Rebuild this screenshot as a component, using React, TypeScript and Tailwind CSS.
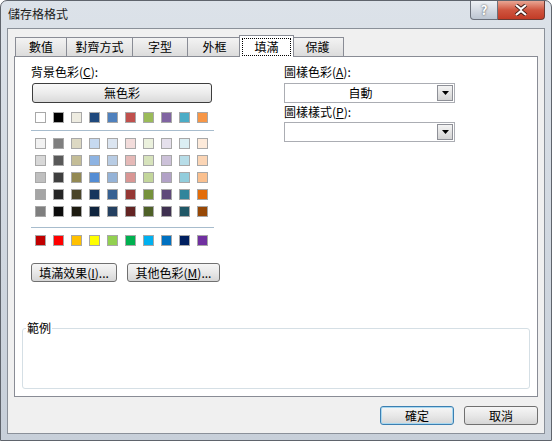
import React from "react";

const THEME = ["#ffffff", "#000000", "#eeece1", "#1f497d", "#4f81bd", "#c0504d", "#9bbb59", "#8064a2", "#4bacc6", "#f79646"];

const SHADES = [
  ["#f2f2f2", "#7f7f7f", "#ddd9c3", "#c6d9f0", "#dbe5f1", "#f2dcdb", "#ebf1dd", "#e5e0ec", "#dbeef3", "#fdeada"],
  ["#d8d8d8", "#595959", "#c4bd97", "#8db3e2", "#b8cce4", "#e5b9b7", "#d7e3bc", "#ccc1d9", "#b7dde8", "#fbd5b5"],
  ["#bfbfbf", "#3f3f3f", "#938953", "#548dd4", "#95b3d7", "#d99694", "#c3d69b", "#b2a2c7", "#92cddc", "#fac08f"],
  ["#a5a5a5", "#262626", "#494429", "#17365d", "#366092", "#953734", "#76923c", "#5f497a", "#31859b", "#e36c09"],
  ["#7f7f7f", "#0c0c0c", "#1d1b10", "#0f243e", "#244061", "#632423", "#4f6128", "#3f3151", "#205867", "#974806"],
];

const STANDARD = ["#c00000", "#ff0000", "#ffc000", "#ffff00", "#92d050", "#00b050", "#00b0f0", "#0070c0", "#002060", "#7030a0"];

const TABS = [
  { label: "數值", w: "w-[52px]" },
  { label: "對齊方式", w: "w-[67px]" },
  { label: "字型", w: "w-[56px]" },
  { label: "外框", w: "w-[55px]" },
  { label: "填滿", w: "w-[55px]", active: true },
  { label: "保護", w: "w-[53px]" },
];

function SwatchRow({ colors }: { colors: string[] }) {
  return (
    <div className="flex gap-[7px] pl-[4px]">
      {colors.map((c, i) => (
        <span
          key={i}
          className="block w-[11px] h-[11px] border border-[#a8a8a8]"
          style={{ background: c }}
        />
      ))}
    </div>
  );
}

function Button({ children, w, focus }: { children: React.ReactNode; w: string; focus?: boolean }) {
  return (
    <div
      className={`${w} shrink-0 h-[19px] flex items-center justify-center rounded-[3px] border bg-gradient-to-b from-[#f6f6f6] via-[#e8e8e8] to-[#d6d6d6] text-black ${
        focus ? "border-[#3c7fb1] shadow-[inset_0_0_0_1px_#a8d8f0]" : "border-[#707070]"
      }`}
    >
      {children}
    </div>
  );
}

function Combo({ value }: { value?: string }) {
  return (
    <div className="w-[171px] h-[20px] flex border border-[#abadb3] bg-white">
      <div className="flex-1 flex items-center justify-center">{value}</div>
      <div className="w-[16px] m-[1px] flex items-center justify-center border border-[#8e9097] bg-gradient-to-b from-[#f4f4f4] to-[#d4d4d4]">
        <svg width="7" height="4" viewBox="0 0 7 4">
          <path d="M0 0h7L3.5 4z" fill="#000" />
        </svg>
      </div>
    </div>
  );
}

export default function App() {
  return (
    <div className="w-[552px] h-[441px] bg-white font-['Noto_Sans_CJK_TC','Noto_Sans_CJK_SC',sans-serif] text-[12px] leading-[14px] text-black">
      <div className="w-[552px] h-[441px] flex flex-col rounded-t-[7px] border border-[#5f646c] bg-gradient-to-b from-[#dce2e9] to-[#c7cfd9]">
        {/* title bar */}
        <div className="h-[27px] flex shrink-0">
          <div className="flex-1 pl-[7px] pt-[6px] text-[#1b1b1b]">儲存格格式</div>
          <div className="flex mr-[6px] h-[20px]">
            <div className="w-[28px] h-[19px] flex items-center justify-center rounded-bl-[4px] border border-[#6b717b] border-t-0 bg-gradient-to-b from-[#eef1f5] to-[#bcc5d1] text-white font-bold text-[13px] [text-shadow:0_0_2px_#333]">
              ?
            </div>
            <div className="w-[47px] h-[19px] flex items-center justify-center rounded-br-[4px] border border-[#6b3b34] border-t-0 border-l-0 bg-gradient-to-b from-[#e8a593] via-[#cf553f] to-[#c23b26]">
              <svg width="14" height="12" viewBox="0 0 14 12">
                <path d="M2 1l5 4 5-4M2 11l5-4 5 4" stroke="#3b1a14" strokeWidth="4" fill="none" />
                <path d="M2 1l5 4 5-4M2 11l5-4 5 4" stroke="#fff" strokeWidth="2.2" fill="none" />
              </svg>
            </div>
          </div>
        </div>

        {/* client area */}
        <div className="flex-1 mx-[6px] mb-[6px] border border-[#8a9099] bg-[#f0f0f0] flex flex-col">
          {/* tabs */}
          <div className="h-[27px] flex items-end pl-[7px]">
            {TABS.map((t, i) =>
              t.active ? (
                <div
                  key={t.label}
                  className={`${t.w} relative z-10 -mb-px -mr-[2px] -ml-[3px] h-[22px] flex items-center justify-center border border-b-0 border-[#898c95] bg-white px-[2px]`}
                >
                  <span className="w-full h-[18px] flex items-center justify-center border border-dotted border-black">
                    {t.label}
                  </span>
                </div>
              ) : (
                <div
                  key={t.label}
                  className={`${t.w} ${i > 0 ? "-ml-px" : ""} h-[19px] flex items-center justify-center border border-b-0 border-[#898c95] bg-gradient-to-b from-[#f3f3f3] to-[#dcdcdc]`}
                >
                  {t.label}
                </div>
              )
            )}
          </div>

          {/* tab panel */}
          <div className="h-[341px] mx-[6px] border border-[#898c95] bg-white flex flex-col">
            <div className="flex">
              {/* left column */}
              <div className="ml-[16px] w-[183px] flex flex-col">
                <div className="mt-[8px] h-[14px]">
                  背景色彩(<span className="underline">C</span>):
                </div>
                <div className="mt-[4px] ml-[1px] w-[180px] h-[20px] flex items-center justify-center rounded-[3px] border border-[#3d3d3d] bg-gradient-to-b from-[#f8f8f8] via-[#ececec] to-[#dadada]">
                  無色彩
                </div>
                <div className="mt-[9px]">
                  <SwatchRow colors={THEME} />
                </div>
                <div className="mt-[7px] h-px bg-[#a7bccd]" />
                <div className="mt-[7px] flex flex-col gap-[6px]">
                  {SHADES.map((row, i) => (
                    <SwatchRow key={i} colors={row} />
                  ))}
                </div>
                <div className="mt-[10px] h-px bg-[#a7bccd]" />
                <div className="mt-[7px]">
                  <SwatchRow colors={STANDARD} />
                </div>
                <div className="mt-[17px] flex gap-[10px]">
                  <Button w="w-[86px]">
                    填滿效果(<span className="underline">I</span>)...
                  </Button>
                  <Button w="w-[93px]">
                    其他色彩(<span className="underline">M</span>)...
                  </Button>
                </div>
              </div>

              {/* right column */}
              <div className="ml-[70px] flex flex-col">
                <div className="mt-[8px] h-[14px]">
                  圖樣色彩(<span className="underline">A</span>):
                </div>
                <div className="mt-[4px]">
                  <Combo value="自動" />
                </div>
                <div className="mt-[2px] h-[14px]">
                  圖樣樣式(<span className="underline">P</span>):
                </div>
                <div className="mt-[3px]">
                  <Combo />
                </div>
              </div>
            </div>

            {/* sample */}
            <fieldset className="mt-auto mx-[7px] mb-[7px] h-[68px] rounded-[3px] border border-[#d5dfe5]">
              <legend className="ml-[3px] px-[1px] leading-[14px]">範例</legend>
            </fieldset>
          </div>

          {/* bottom buttons */}
          <div className="flex justify-end gap-[10px] mr-[6px] mt-[9px]">
            <Button w="w-[74px]" focus>
              確定
            </Button>
            <Button w="w-[74px]">取消</Button>
          </div>
        </div>
      </div>
    </div>
  );
}
